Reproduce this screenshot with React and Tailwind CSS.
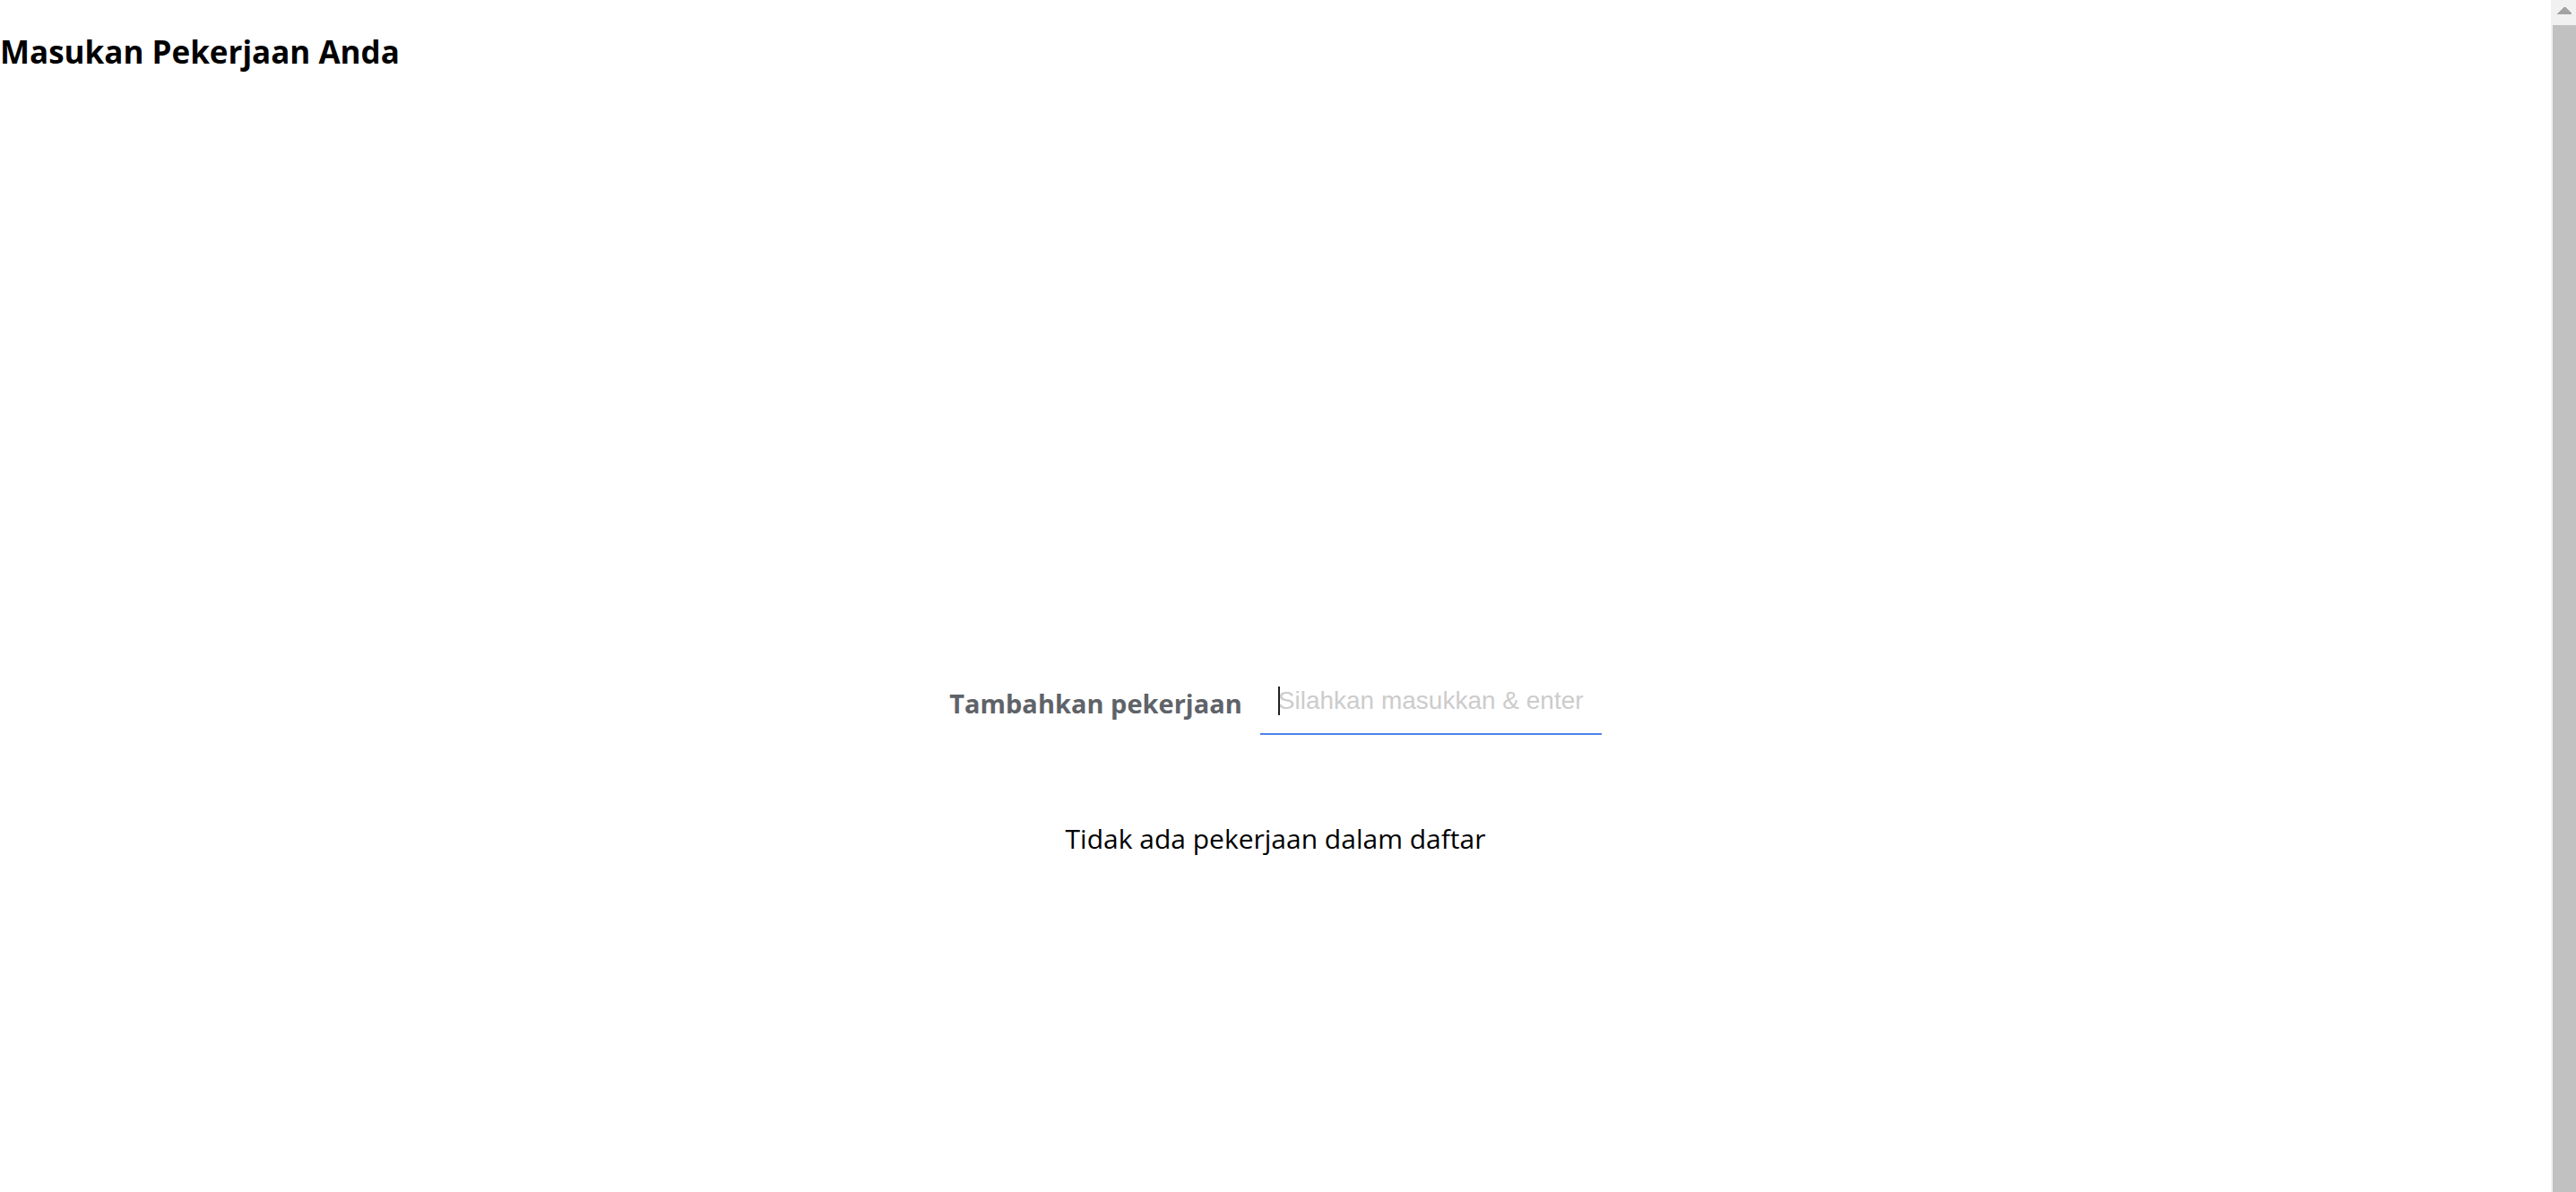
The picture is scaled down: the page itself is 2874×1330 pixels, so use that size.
function Scrollbar() {
  return (
    <div aria-hidden="true" className="flex w-7 shrink-0 flex-col bg-[#f1f1f1]">
      <div className="flex h-7 items-start justify-center pt-2 pl-0.5">
        <svg width="16" height="8" viewBox="0 0 16 8" fill="#a3a3a3" shapeRendering="crispEdges">
          <path d="M7 0h2L16 7v1H0V7z" />
        </svg>
      </div>
      <div className="ml-0.5 grow bg-[#c1c1c1]" />
    </div>
  );
}

export default function App() {
  return (
    <div className="flex min-h-screen bg-white font-['Open_Sans','Noto_Sans',sans-serif] text-black">
      <div className="flex grow flex-col">
        <h1 className="pt-8 text-[35px] leading-[52px] font-bold">Masukan Pekerjaan Anda</h1>
        <main className="flex grow flex-col items-center justify-center gap-24 pt-72">
          <form className="flex items-center gap-5" onSubmit={(e) => e.preventDefault()}>
            <label htmlFor="job" className="pt-1 text-[29px] leading-10 font-bold text-[#5f6368]">
              Tambahkan pekerjaan
            </label>
            <div className="relative">
              <input
                id="job"
                type="text"
                placeholder="Silahkan masukkan & enter"
                className="block h-[74px] w-[381px] border-b-2 border-[#4f83e8] px-5 font-['Liberation_Sans',sans-serif] text-[28px] caret-transparent outline-none placeholder:text-[#cccccc]"
              />
              <span aria-hidden="true" className="absolute top-5 left-5 h-8 w-0.5 bg-[#202124]" />
            </div>
          </form>
          <p className="text-[30px] leading-10">Tidak ada pekerjaan dalam daftar</p>
        </main>
      </div>
      <Scrollbar />
    </div>
  );
}
